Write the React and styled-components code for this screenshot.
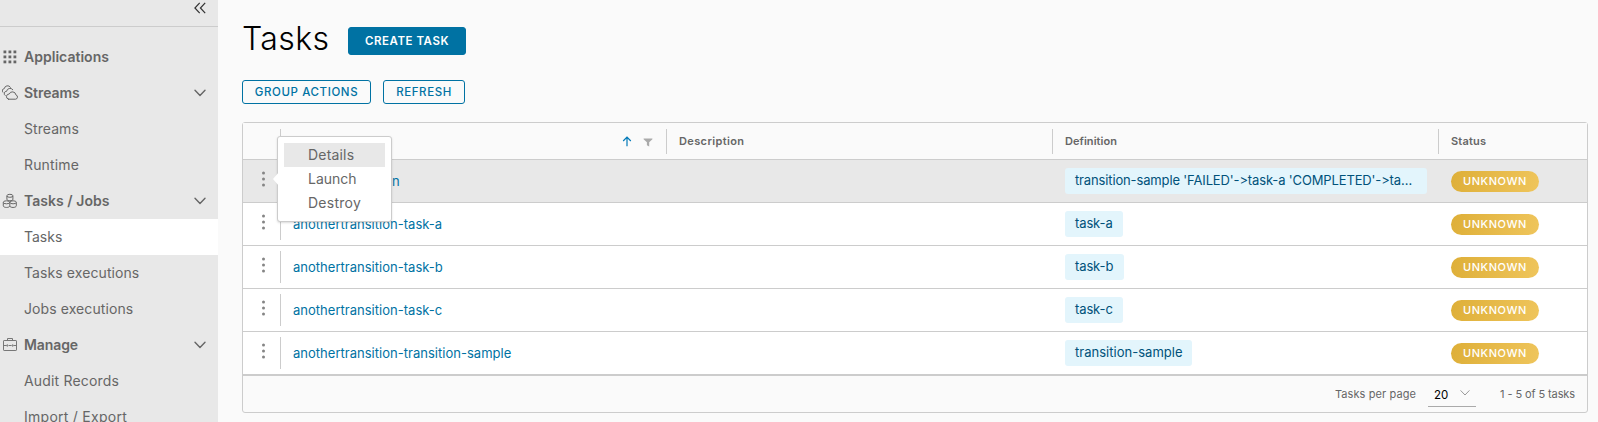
import React from 'react';
import styled, { createGlobalStyle, css } from 'styled-components';

const GlobalStyle = createGlobalStyle`
  *, *::before, *::after { box-sizing: border-box; }
  body {
    margin: 0;
    height: 422px;
    overflow: hidden;
    background: #fafafa;
    color: #666;
    font-family: Inter, "Liberation Sans", sans-serif;
    font-feature-settings: "calt" 0;
  }
`;

const Tracked = styled.span`
  letter-spacing: ${(p) => p.$ls || 0}px;
`;

const Shell = styled.div`
  display: flex;
  height: 422px;
`;

/* ---------- sidebar ---------- */

const Sidebar = styled.nav`
  flex: 0 0 218px;
  overflow: hidden;
  background: #e8e8e8;
`;

const CollapseBar = styled.div`
  height: 27px;
  margin-bottom: 12px;
  padding: 2px 12px 0 0;
  display: flex;
  justify-content: flex-end;
  border-bottom: 1px solid #ccc;
`;

const NavItem = styled.a`
  display: flex;
  align-items: center;
  height: 36px;
  padding: 0 12px 0 2px;
  font-size: 14px;
  font-weight: ${(p) => (p.$group ? 600 : 400)};
  color: #666;
  background: ${(p) => (p.$active ? '#fff' : 'transparent')};
`;

const NavIcon = styled.span`
  flex: 0 0 22px;
  display: flex;
`;

const NavLabel = styled(Tracked)`
  flex: 1;
  padding-bottom: 2px;
  white-space: nowrap;
`;

/* ---------- main area ---------- */

const Main = styled.main`
  flex: 1;
  padding: 24px 10px 0 24px;
`;

const TitleRow = styled.header`
  display: flex;
  align-items: center;
  height: 34px;
`;

const Title = styled.h1`
  width: 106px;
  margin: -5px 0 0;
  font-size: 32px;
  font-weight: 300;
  line-height: 34px;
  letter-spacing: 0.35px;
  color: #000;
`;

const Button = styled.button`
  width: ${(p) => p.$w}px;
  height: ${(p) => (p.$primary ? 28 : 24)}px;
  margin: 0;
  padding: 1px 0 0;
  border: 1px solid #0072a3;
  border-radius: 3px;
  font-family: inherit;
  font-size: 11.5px;
  line-height: 1;
  font-weight: ${(p) => (p.$primary ? 600 : 500)};
  letter-spacing: ${(p) => p.$ls}px;
  color: ${(p) => (p.$primary ? '#fff' : '#0072a3')};
  background: ${(p) => (p.$primary ? '#0072a3' : 'transparent')};
`;

const Actions = styled.div`
  display: flex;
  gap: 12px;
  margin: 22px 0 18px;
`;

/* ---------- datagrid ---------- */

const Grid = styled.section`
  width: 1346px;
  height: 291px;
  border: 1px solid #ccc;
  border-radius: 3px;
`;

const Row = styled.div`
  display: grid;
  grid-template-columns: 38px 386px 386px 386px 1fr;
  height: 43px;
  border-bottom: 1px solid #ccc;
  background: ${(p) => (p.$selected ? '#e8e8e8' : '#fff')};
`;

const HeadRow = styled(Row)`
  height: 37px;
  background: #fafafa;
`;

const Cell = styled.div`
  position: relative;
  display: flex;
  align-items: center;
  min-width: 0;
  padding: 0 12px;
  font-size: 13px;
  ${(p) =>
    p.$divider &&
    css`
      &::after {
        content: '';
        position: absolute;
        right: 0;
        top: ${p.$divider === 'head' ? 6 : 5}px;
        width: 1px;
        height: ${p.$divider === 'head' ? 25 : 32}px;
        background: #ccc;
      }
    `}
`;

const HeadCell = styled(Cell)`
  font-size: 11px;
  font-weight: 600;
`;

const HeadTools = styled.span`
  display: flex;
  gap: 11px;
  align-items: center;
  margin: 0 2px 0 auto;
`;

const MenuCell = styled(Cell)`
  padding: 0 0 4px 17.5px;
`;

const TaskLink = styled.a`
  color: #0072a3;
  letter-spacing: ${(p) => (p.$wide ? 0.14 : 0.02)}px;
`;

const Chip = styled.span`
  flex: 0 1 ${(p) => p.$w}px;
  height: 26px;
  padding: 0 10px;
  border-radius: 3px;
  line-height: 25px;
  white-space: nowrap;
  overflow: hidden;
  color: #00527a;
  background: #e3f5fc;
`;

const Status = styled.span`
  width: 88px;
  height: 21px;
  margin-top: 1px;
  border-radius: 11px;
  text-align: center;
  font-size: 11px;
  font-weight: 500;
  line-height: 21px;
  letter-spacing: 0.55px;
  color: #fff;
  background: linear-gradient(100deg, #deaf38, #efc55c);
`;

const Footer = styled.footer`
  display: flex;
  align-items: center;
  justify-content: flex-end;
  height: 38px;
  padding-right: 12px;
  border-top: 1px solid #ccc;
  font-size: 11px;
`;

const FooterText = styled(Tracked)`
  padding-bottom: 1px;
`;

const PageSize = styled.span`
  display: flex;
  align-items: center;
  justify-content: space-between;
  width: 48px;
  height: 24px;
  margin: 1px 24px 0 12px;
  padding: 1px 6px 0;
  border-bottom: 1px solid #aaa;
  font-size: 11.5px;
  color: #000;

  svg {
    margin-bottom: 5px;
  }
`;

/* ---------- row menu ---------- */

const Popup = styled.div`
  position: absolute;
  z-index: 2;
  left: 34px;
  top: -24px;
  width: 115px;
  height: 86px;
  padding: 6px;
  border: 1px solid #ccc;
  border-radius: 3px;
  background: #fff;
  box-shadow: 0 1px 2px rgba(115, 115, 115, 0.25);
`;

const PopupArrow = styled.svg`
  position: absolute;
  left: -5px;
  top: 35px;
`;

const PopupItem = styled.div`
  height: 24px;
  padding-left: 24px;
  line-height: 23px;
  font-size: 14px;
  letter-spacing: ${(p) => p.$ls}px;
  background: ${(p) => (p.$hover ? '#e8e8e8' : 'transparent')};
`;

/* ---------- icons ---------- */

const Chevron = ({ size = 12, color = '#666', w = 1.4 }) => (
  <svg width={size} height={size} viewBox="0 0 12 12" fill="none" stroke={color} strokeWidth={w}>
    <path d="M1 3.2 6 8.4 11 3.2" strokeLinecap="round" strokeLinejoin="round" />
  </svg>
);

const CollapseIcon = () => (
  <svg width="12" height="12" viewBox="0 0 12 12" fill="none" stroke="#333" strokeWidth="1.2">
    <path d="M5.7.8.9 6l4.8 5.2M11.2.8 6.4 6l4.8 5.2" />
  </svg>
);

const AppsIcon = () => (
  <svg width="16" height="16" fill="#666">
    {[1.5, 6.5, 11.5].map((y) =>
      [1.5, 6.5, 11.5].map((x) => <rect key={`${x}-${y}`} x={x} y={y} width="2.8" height="2.8" />)
    )}
  </svg>
);

const CloudsIcon = () => (
  <svg width="18" height="16" viewBox="0 0 18 16" fill="none" stroke="#666" strokeWidth="1" strokeLinecap="round">
    <path d="M6.4 14.2h7.100a2.200 2.200 0 0 0 .4-4.300 3.500 3.500 0 0 0-6.700-.9 2.650 2.650 0 0 0-.8 5.200z" />
    <path d="M3.200 10.500A2.300 2.300 0 0 1 4.600 6.300 3.500 3.500 0 0 1 10.800 4.700" />
    <path d="M.8 7.200A2.200 2.200 0 0 1 2.300 3.600 3.400 3.400 0 0 1 8.500 2.300" />
  </svg>
);

const CubesIcon = () => (
  <svg width="16" height="16" viewBox="0 0 16 16" fill="none" stroke="#666" strokeWidth="1">
    <path d="M4.900 3v3.300c0 2 6 2 6 0V3" />
    <ellipse cx="7.900" cy="2.800" rx="3" ry="1.500" />
    <path d="M1.300 9.500v3.300c0 2.200 6.500 2.200 6.500 0V9.500M7.800 12.800c0 2.200 6.500 2.200 6.500 0V9.500" />
    <ellipse cx="4.500" cy="9.300" rx="3.200" ry="1.500" />
    <ellipse cx="11.100" cy="9.300" rx="3.200" ry="1.500" />
  </svg>
);

const CaseIcon = () => (
  <svg width="16" height="16" viewBox="0 0 16 16" fill="none" stroke="#777" strokeWidth="1">
    <rect x="1.500" y="3.500" width="13" height="10" rx=".6" />
    <path d="M5.500 3.500v-2h5v2M1.500 8.500h3.300M6.500 8.500h3.200M11.300 8.500h3.200M5.300 7.300v2.400M10.700 7.300v2.400" />
  </svg>
);

const ArrowUp = () => (
  <svg width="10" height="11" viewBox="0 0 10 11" fill="none" stroke="#0079b8" strokeWidth="1.200">
    <path d="M5 10.200V1.200M1.200 5 5 1.200 8.800 5" />
  </svg>
);

const Funnel = () => (
  <svg width="10" height="12" viewBox="0 0 10 12" fill="#aaa">
    <path d="M.6 3.500h8.800v.7L6.200 7.300v4.200L3.900 10.300v-3L.6 4.200z" />
  </svg>
);

const Dots = () => (
  <svg width="5" height="16" viewBox="0 0 5 16" fill="#858585">
    <circle cx="2.500" cy="2" r="1.500" />
    <circle cx="2.500" cy="8" r="1.500" />
    <circle cx="2.500" cy="14" r="1.500" />
  </svg>
);

/* ---------- data ---------- */

const NAV = [
  { label: 'Applications', icon: AppsIcon, group: true, ls: 0.02 },
  { label: 'Streams', icon: CloudsIcon, group: true, open: true, ls: -0.05 },
  { label: 'Streams', ls: 0.06 },
  { label: 'Runtime', ls: 0.14 },
  { label: 'Tasks / Jobs', icon: CubesIcon, group: true, open: true, ls: 0.04 },
  { label: 'Tasks', active: true },
  { label: 'Tasks executions', ls: 0.09 },
  { label: 'Jobs executions', ls: 0.09 },
  { label: 'Manage', icon: CaseIcon, group: true, open: true, ls: -0.1 },
  { label: 'Audit Records', ls: 0.18 },
  { label: 'Import / Export', ls: 0.26 },
];

const TASKS = [
  { name: 'anothertransition', def: "transition-sample 'FAILED'->task-a 'COMPLETED'->ta…", w: 362, ls: -0.14, menu: true },
  { name: 'anothertransition-task-a', def: 'task-a', w: 58, ls: -0.12 },
  { name: 'anothertransition-task-b', def: 'task-b', w: 59, ls: -0.12 },
  { name: 'anothertransition-task-c', def: 'task-c', w: 58, ls: -0.12 },
  { name: 'anothertransition-transition-sample', def: 'transition-sample', w: 127, ls: 0.02 },
];

const RowMenu = () => (
  <Popup>
    <PopupArrow width="6" height="14" viewBox="0 0 6 14">
      <path d="M6 0 0 7l6 7z" fill="#fff" />
    </PopupArrow>
    <PopupItem $hover $ls={0.19}>Details</PopupItem>
    <PopupItem $ls={-0.02}>Launch</PopupItem>
    <PopupItem $ls={0.25}>Destroy</PopupItem>
  </Popup>
);

export default function App() {
  return (
    <>
      <GlobalStyle />
      <Shell>
        <Sidebar>
          <CollapseBar>
            <CollapseIcon />
          </CollapseBar>
          {NAV.map(({ label, icon: Icon, group, open, active, ls }, i) => (
            <NavItem key={i} $group={group} $active={active}>
              <NavIcon>{Icon && <Icon />}</NavIcon>
              <NavLabel $ls={ls}>{label}</NavLabel>
              {open && <Chevron />}
            </NavItem>
          ))}
        </Sidebar>
        <Main>
          <TitleRow>
            <Title>Tasks</Title>
            <Button $primary $w={118} $ls={0.54}>CREATE TASK</Button>
          </TitleRow>
          <Actions>
            <Button $w={129} $ls={0.6}>GROUP ACTIONS</Button>
            <Button $w={82} $ls={0.59}>REFRESH</Button>
          </Actions>
          <Grid>
            <HeadRow>
              <HeadCell $divider="head" />
              <HeadCell $divider="head">
                <HeadTools>
                  <ArrowUp />
                  <Funnel />
                </HeadTools>
              </HeadCell>
              <HeadCell $divider="head"><Tracked $ls={0.37}>Description</Tracked></HeadCell>
              <HeadCell $divider="head"><Tracked $ls={0.05}>Definition</Tracked></HeadCell>
              <HeadCell><Tracked $ls={0.19}>Status</Tracked></HeadCell>
            </HeadRow>
            {TASKS.map((t) => (
              <Row key={t.name} $selected={t.menu}>
                <MenuCell $divider="row">
                  <Dots />
                  {t.menu && <RowMenu />}
                </MenuCell>
                <Cell><TaskLink $wide={t.menu}>{t.name}</TaskLink></Cell>
                <Cell />
                <Cell><Chip $w={t.w}><Tracked $ls={t.ls}>{t.def}</Tracked></Chip></Cell>
                <Cell><Status>UNKNOWN</Status></Cell>
              </Row>
            ))}
            <Footer>
              <FooterText $ls={0.1}>Tasks per page</FooterText>
              <PageSize>
                20
                <Chevron size={10} color="#999" w={1.2} />
              </PageSize>
              <FooterText $ls={-0.1}>1 - 5 of 5 tasks</FooterText>
            </Footer>
          </Grid>
        </Main>
      </Shell>
    </>
  );
}
